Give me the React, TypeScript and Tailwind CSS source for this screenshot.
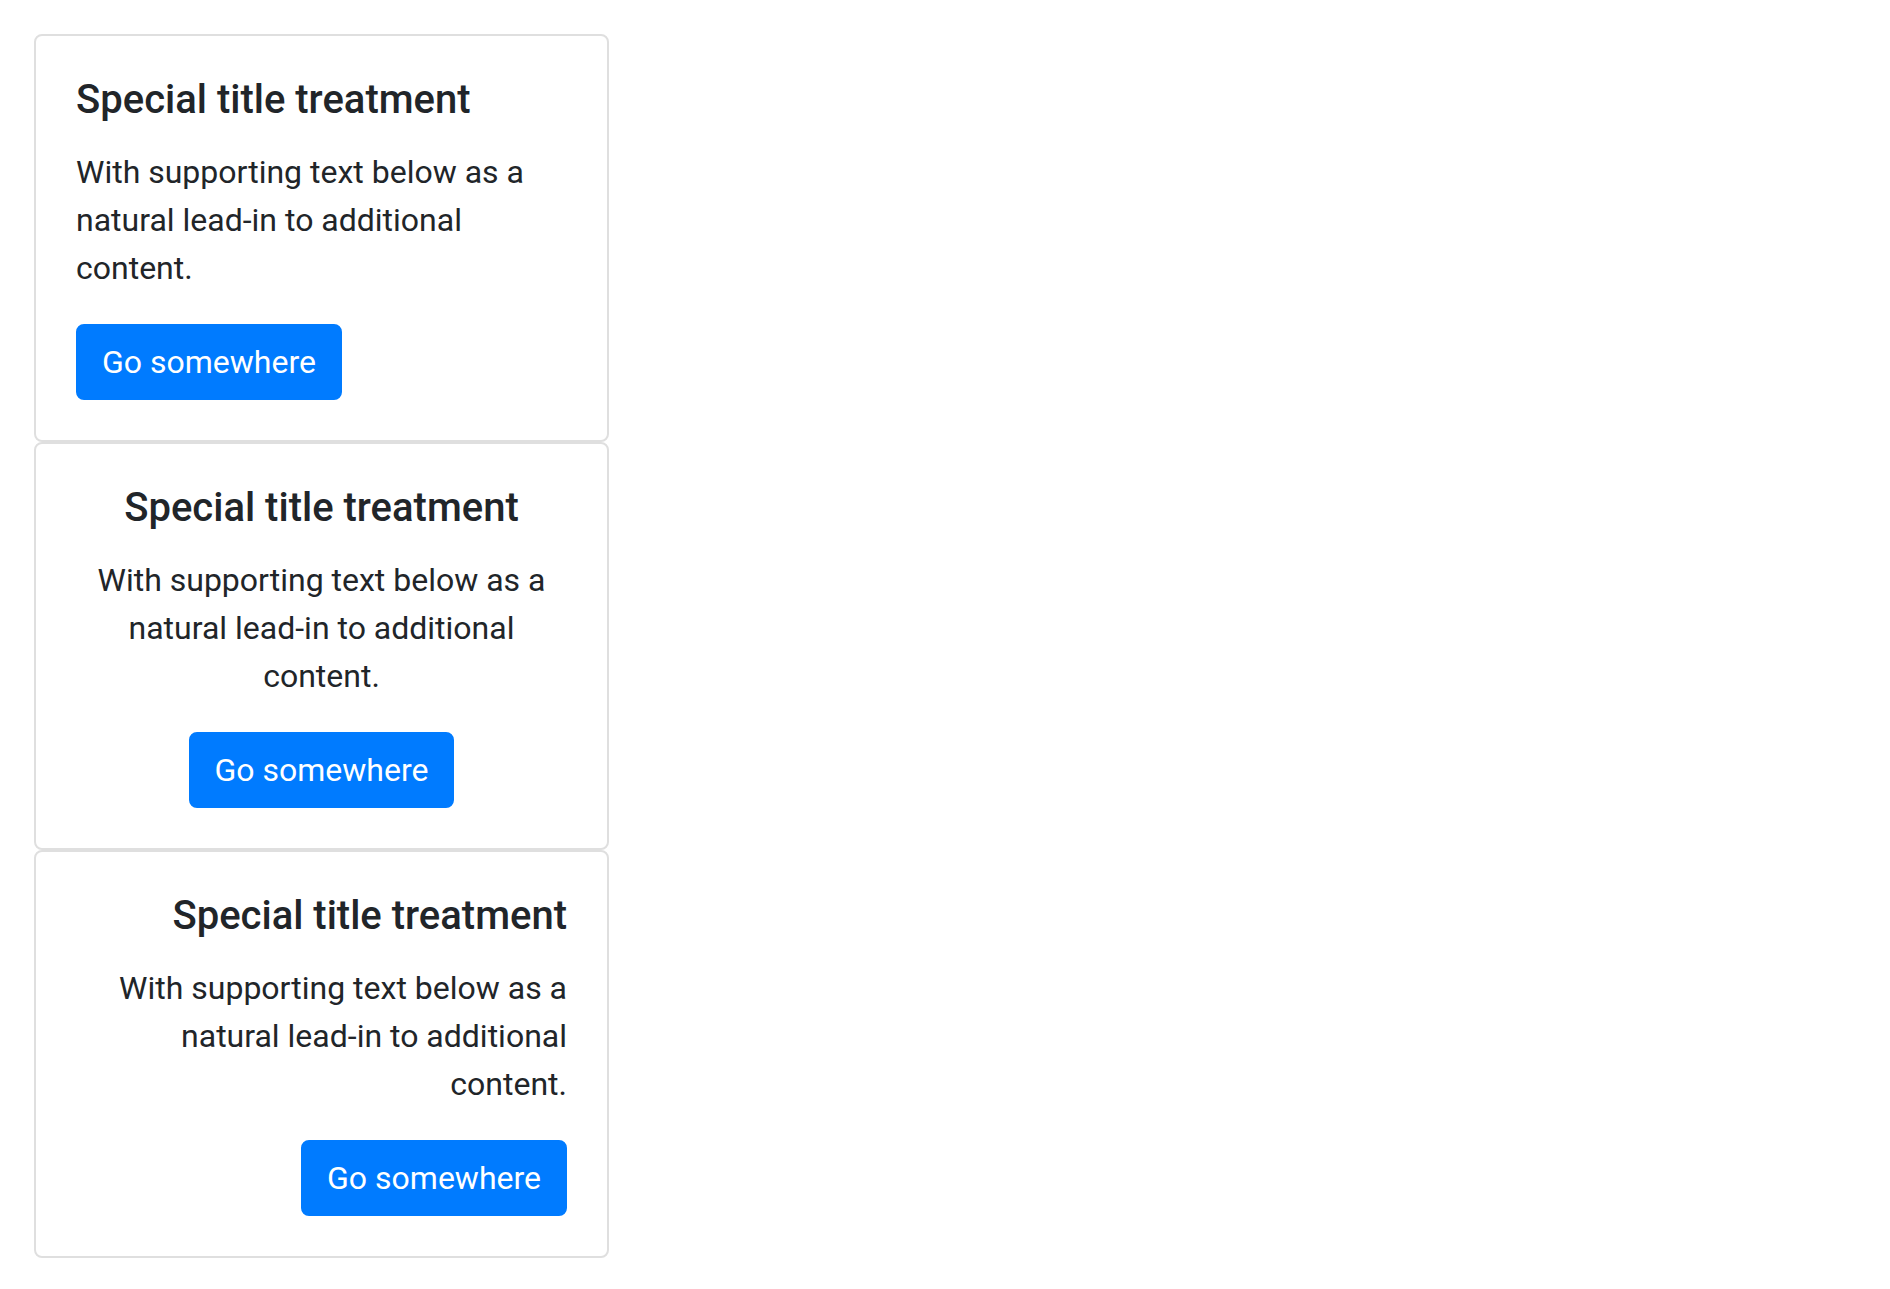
function Card({ align }: { align: string }) {
  return (
    <div className={`border-2 border-[#dfdfdf] rounded-[8px] bg-white p-[40px] ${align}`}>
      <h5 className="text-[40px] leading-[48px] font-medium mb-[24px]">Special title treatment</h5>
      <p className="text-[32px] leading-[48px] mb-[32px]">
        With supporting text below as a natural lead-in to additional content.
      </p>
      <a
        href="#"
        className="inline-block bg-[#007bff] text-white text-[32px] leading-[48px] px-[24px] py-[12px] border-2 border-[#007bff] rounded-[8px]"
      >
        Go somewhere
      </a>
    </div>
  )
}

export default function App() {
  return (
    <div className="min-h-screen bg-white text-[#212529] font-['Roboto',sans-serif]">
      <div className="w-[575px] ml-[34px] pt-[34px] flex flex-col">
        <Card align="text-left" />
        <Card align="text-center" />
        <Card align="text-right" />
      </div>
    </div>
  )
}
